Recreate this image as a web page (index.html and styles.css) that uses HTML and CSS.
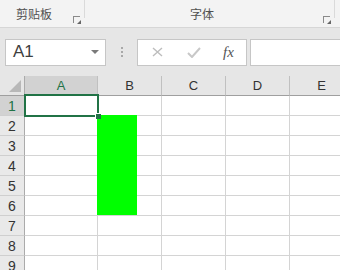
FILE: index.html
```html
<!DOCTYPE html>
<html lang="zh-CN">
<head>
    <meta charset="UTF-8">
    <title>Sheet</title>
    <link rel="stylesheet" href="styles.css">
</head>
<body>
    <div class="ribbon">
        <div class="group group-clip">
            <span class="group-label">剪贴板</span>
            <span class="launcher"></span>
        </div>
        <div class="group group-font">
            <span class="group-label">字体</span>
            <span class="launcher"></span>
        </div>
    </div>

    <div class="formula-bar">
        <div class="name-box">
            <span class="name-text">A1</span>
            <span class="name-arrow"></span>
        </div>
        <div class="grip"><i></i><i></i><i></i></div>
        <div class="fx-buttons">
            <svg class="fx-icon" width="11" height="10" viewBox="0 0 11 10">
                <path d="M1 1 L10 9 M10 1 L1 9" stroke="#bdbdbd" stroke-width="1.4" fill="none"/>
            </svg>
            <svg class="fx-icon" width="14" height="11" viewBox="0 0 14 11">
                <path d="M1 6 L5 10 L13 1" stroke="#c8c8c8" stroke-width="2" fill="none"/>
            </svg>
            <span class="fx-label">fx</span>
        </div>
        <div class="formula-input"></div>
    </div>

    <div class="sheet">
        <div class="grid">
            <div class="corner"><span class="corner-tri"></span></div>
            <div class="col-head selected">A</div>
            <div class="col-head">B</div>
            <div class="col-head">C</div>
            <div class="col-head">D</div>
            <div class="col-head">E</div>
        </div>
        <div id="rows"></div>

        <!-- filled shape over B2:B6 -->
        <div class="shape"></div>
        <div class="selection"><span class="handle"></span></div>
    </div>

    <script>
        var rows = document.getElementById('rows');
        for (var r = 1; r <= 9; r++) {
            var row = document.createElement('div');
            row.className = 'grid';
            var html = '<div class="row-head' + (r === 1 ? ' selected' : '') + '">' + r + '</div>';
            for (var c = 0; c < 5; c++) {
                html += '<div class="cell"></div>';
            }
            row.innerHTML = html;
            rows.appendChild(row);
        }
    </script>
</body>
</html>
```

FILE: styles.css
```css
body {
    margin: 0;
    width: 340px;
    height: 270px;
    overflow: hidden;
    font-family: "Liberation Sans", "Noto Sans CJK SC", sans-serif;
    background-color: #fff;
}

/* ribbon strip */
.ribbon {
    display: flex;
    height: 27px;
    background-color: #f3f3f3;
    border-bottom: 1px solid #d6d6d6;
}

.group {
    position: relative;
    display: flex;
    align-items: center;
    height: 18px;
    padding-top: 9px;
    border-right: 1px solid #dadada;
}

.group-clip {
    width: 85px;
    padding-left: 16px;
    box-sizing: border-box;
}

.group-font {
    width: 250px;
    padding-left: 105px;
    box-sizing: border-box;
}

.group-label {
    font-size: 12px;
    color: #505050;
}

.launcher {
    position: absolute;
    right: 4px;
    top: 16px;
    width: 6px;
    height: 6px;
    border-left: 1px solid #8a8a8a;
    border-top: 1px solid #8a8a8a;
}

.launcher::after {
    content: "";
    position: absolute;
    right: -1px;
    bottom: -1px;
    border-left: 4px solid transparent;
    border-bottom: 4px solid #666;
}

/* formula bar */
.formula-bar {
    display: flex;
    align-items: center;
    height: 48px;
    padding: 0 0 0 5px;
    background-color: #e6e6e6;
    box-sizing: border-box;
}

.name-box {
    display: flex;
    align-items: center;
    justify-content: space-between;
    width: 101px;
    height: 27px;
    padding: 0 6px 0 7px;
    box-sizing: border-box;
    background-color: #fff;
    border: 1px solid #c6c6c6;
}

.name-text {
    font-size: 17px;
    color: #3f3f3f;
}

.name-arrow {
    border-left: 4px solid transparent;
    border-right: 4px solid transparent;
    border-top: 4px solid #7a7a7a;
}

.grip {
    display: flex;
    flex-direction: column;
    gap: 2px;
    width: 31px;
    align-items: center;
}

.grip i {
    width: 2px;
    height: 2px;
    background-color: #a8a8a8;
}

.fx-buttons {
    display: flex;
    align-items: center;
    width: 110px;
    height: 27px;
    padding-left: 14px;
    box-sizing: border-box;
    background-color: #fff;
    border: 1px solid #c6c6c6;
}

.fx-icon {
    margin-right: 24px;
}

.fx-icon + .fx-icon {
    margin-right: 22px;
}

.fx-label {
    font-family: "Liberation Serif", serif;
    font-style: italic;
    font-size: 15px;
    color: #555;
}

.formula-input {
    flex: 1;
    height: 27px;
    margin-left: 3px;
    box-sizing: border-box;
    background-color: #fff;
    border: 1px solid #c6c6c6;
    border-right: none;
}

/* sheet grid */
.sheet {
    position: relative;
}

.grid {
    display: grid;
    grid-template-columns: 25px 73px 64px 64px 64px 64px;
    height: 20px;
}

.grid > div {
    box-sizing: border-box;
}

.corner {
    position: relative;
    background-color: #e6e6e6;
    border-right: 1px solid #ababab;
    border-bottom: 1px solid #9f9f9f;
}

.corner-tri {
    position: absolute;
    right: 3px;
    bottom: 3px;
    border-left: 12px solid transparent;
    border-bottom: 12px solid #b8b8b8;
}

.col-head {
    display: flex;
    align-items: center;
    justify-content: center;
    font-size: 13px;
    color: #333;
    background-color: #e6e6e6;
    border-right: 1px solid #c0c0c0;
    border-bottom: 1px solid #9f9f9f;
}

.row-head {
    display: flex;
    align-items: center;
    justify-content: center;
    font-size: 14px;
    color: #333;
    background-color: #e9e9e9;
    border-right: 1px solid #ababab;
    border-bottom: 1px solid #cfcfcf;
}

.col-head.selected,
.row-head.selected {
    background-color: #d2d2d2;
    color: #217346;
}

.cell {
    border-right: 1px solid #d4d4d4;
    border-bottom: 1px solid #d4d4d4;
}

.shape {
    position: absolute;
    left: 97px;
    top: 39px;
    width: 40px;
    height: 100px;
    background-color: #00ff00;
}

.selection {
    position: absolute;
    left: 24px;
    top: 18px;
    width: 75px;
    height: 23px;
    box-sizing: border-box;
    border: 2px solid #217346;
}

.handle {
    position: absolute;
    right: -4px;
    bottom: -4px;
    width: 5px;
    height: 5px;
    background-color: #217346;
    border-left: 1px solid #fff;
    border-top: 1px solid #fff;
}
```
